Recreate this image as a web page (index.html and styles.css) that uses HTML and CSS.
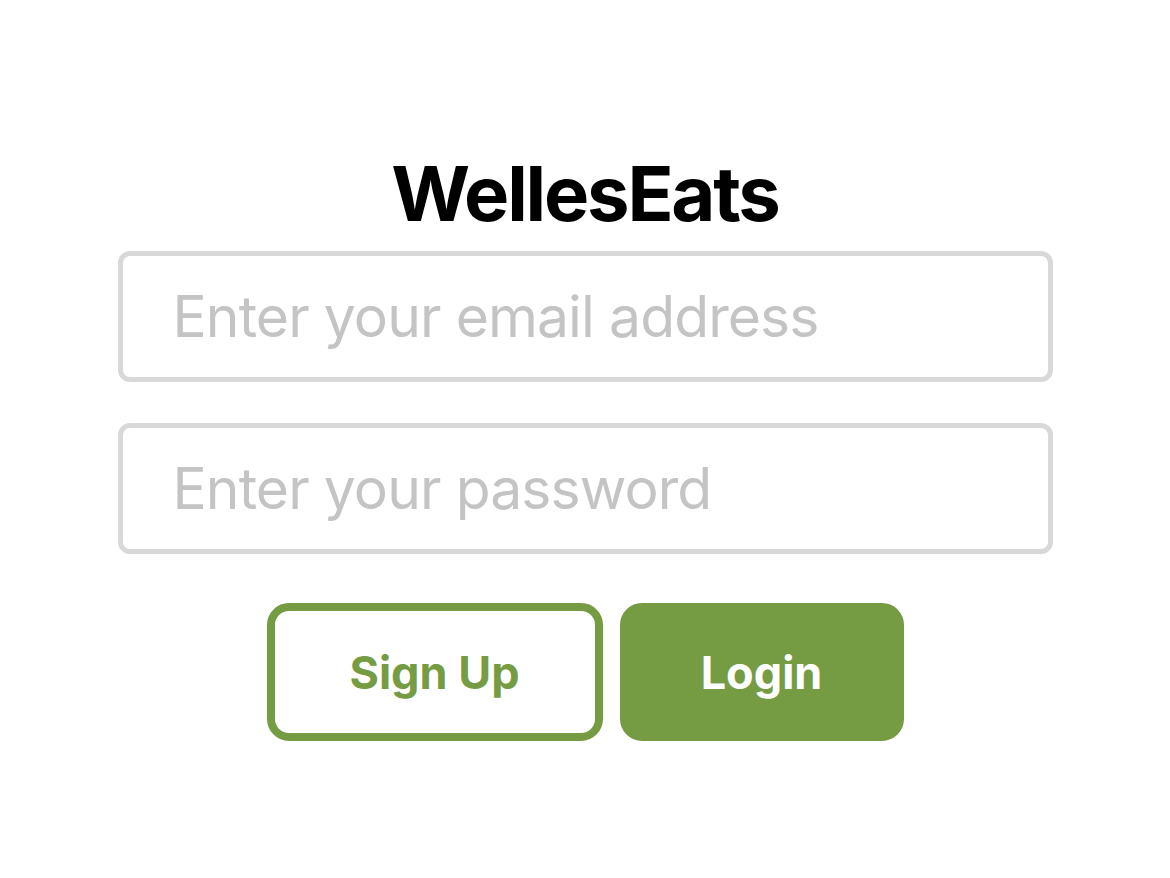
FILE: index.html
```html
<!DOCTYPE html>
<html lang="en">
<head>
<meta charset="utf-8">
<title>WellesEats</title>
<link rel="stylesheet" href="styles.css">
</head>
<body>
<main class="page">
  <form class="login-form">
    <h1 class="title">WellesEats</h1>
    <input class="field" type="email" placeholder="Enter your email address">
    <input class="field field-password" type="password" placeholder="Enter your password">
    <div class="actions">
      <button type="button" class="btn btn-outline">Sign Up</button>
      <button type="button" class="btn btn-solid">Login</button>
    </div>
  </form>
</main>
</body>
</html>
```
FILE: styles.css
```css
html, body {
  margin: 0;
  padding: 0;
  background: #ffffff;
}

body {
  font-family: Inter, "Noto Sans", "Liberation Sans", sans-serif;
}

.page {
  width: 1170px;
  height: 878px;
  display: flex;
  justify-content: center;
}

.login-form {
  width: 935px;
  padding-top: 147px;
  display: flex;
  flex-direction: column;
  align-items: center;
}

.title {
  margin: 0 0 12px;
  font-size: 76px;
  font-weight: 700;
  line-height: 92px;
  color: #000000;
  letter-spacing: -2.2px;
}

.field {
  box-sizing: border-box;
  width: 935px;
  height: 131px;
  border: 5px solid #d8d8d8;
  border-radius: 12px;
  padding: 0 0 0 50px;
  font-family: Inter, "Noto Sans", "Liberation Sans", sans-serif;
  font-size: 57px;
  letter-spacing: -0.9px;
  color: #222;
  outline: none;
  background: #fff;
}

.field::placeholder {
  color: #c4c4c4;
}

.field-password {
  margin-top: 41px;
}

.actions {
  margin-top: 49px;
  display: flex;
  gap: 17px;
}

.btn {
  box-sizing: border-box;
  height: 138px;
  padding: 0 73px;
  border: 8px solid #759c43;
  border-radius: 22px;
  font-family: Inter, "Noto Sans", "Liberation Sans", sans-serif;
  font-size: 45px;
  font-weight: 700;
  cursor: pointer;
}

.btn-outline {
  width: 336px;
  background: #ffffff;
  color: #759c43;
}

.btn-solid {
  width: 284px;
  background: #759c43;
  color: #ffffff;
}
```
